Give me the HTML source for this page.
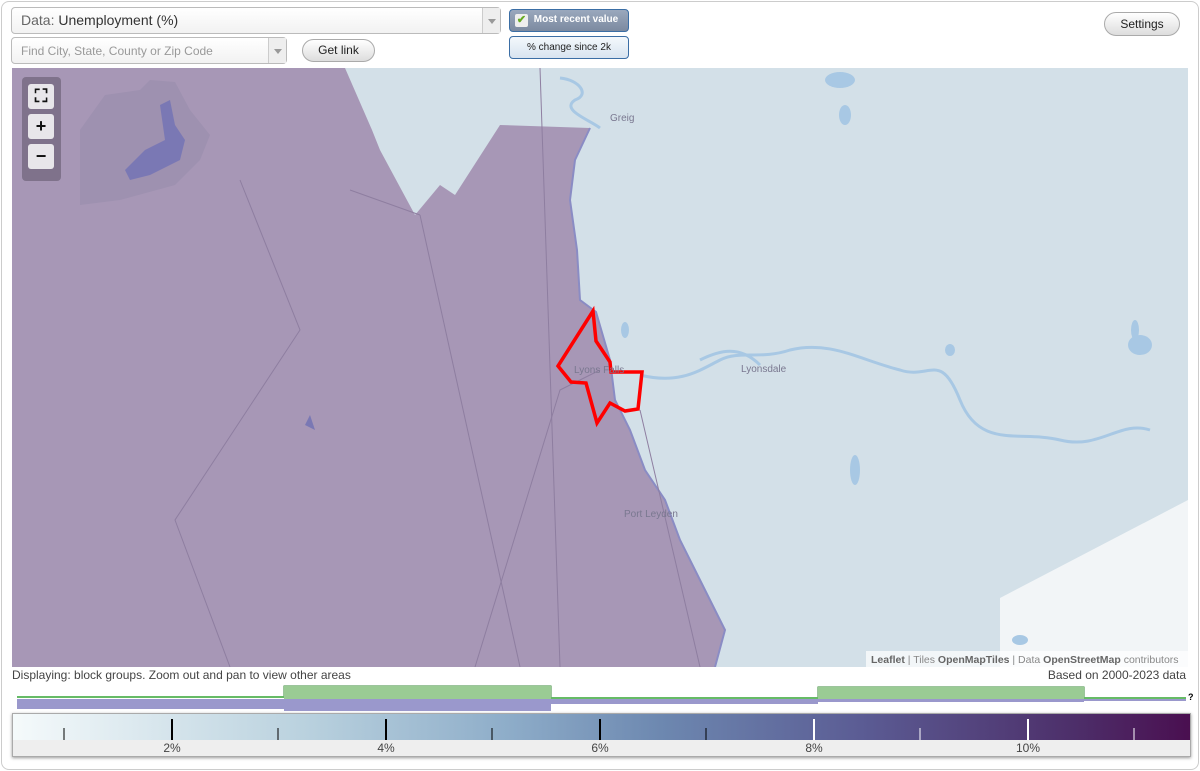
<!DOCTYPE html>
<html><head><meta charset="utf-8"><style>
*{box-sizing:border-box}
body{margin:0;width:1200px;height:771px;background:#fff;font-family:"Liberation Sans",Arial,sans-serif;overflow:hidden;position:relative}
.frame{position:absolute;left:1px;top:1px;width:1198px;height:769px;border:1px solid #ccc;border-radius:8px}
.sel{position:absolute;border:1px solid #bbb;border-radius:4px;background:linear-gradient(#fff,#f2f2f2);font-size:15px;color:#666}
.arr{position:absolute;right:0;top:0;bottom:0;width:18px;border-left:1px solid #ccc;background:#eee}
.arr:after{content:"";position:absolute;left:5px;top:50%;margin-top:-2px;border:4px solid transparent;border-top:5px solid #999}
.btn{position:absolute;border:1px solid #aaa;border-radius:12px;background:linear-gradient(#fff,#ddd);font-size:12px;color:#222;text-align:center}
.tog{position:absolute;border:1px solid #3b6ea5;border-radius:4px;font-size:10px;text-align:center}
.zc{position:absolute;left:22px;top:77px;width:39px;height:104px;background:rgba(100,90,110,.6);border-radius:4px}
.zb{position:absolute;left:6px;width:26px;height:25px;background:#e8e6ea;border-radius:3px;text-align:center;font-weight:bold;font-size:18px;line-height:24px;color:#111}
</style></head><body>
<div class="frame"></div>
<div class="sel" style="left:11px;top:7px;width:490px;height:27px;padding:4px 9px;font-size:14px">Data: <span style="color:#333">Unemployment (%)</span><div class="arr"></div></div>
<div class="sel" style="left:11px;top:37px;width:276px;height:27px;padding:6px 9px;font-size:12px;color:#999">Find City, State, County or Zip Code<div class="arr"></div></div>
<div class="btn" style="left:302px;top:39px;width:73px;height:23px;line-height:21px">Get link</div>
<div class="tog" style="left:509px;top:9px;width:120px;height:23px;line-height:20px;background:linear-gradient(#9aa8bd,#7c8aa0);color:#fff;font-weight:bold;padding-left:14px"><span style="position:absolute;left:5px;top:4px;width:13px;height:13px;background:#eee;border-radius:2px;color:#6a2;font-size:11px;line-height:13px">✔</span>Most recent value</div>
<div class="tog" style="left:509px;top:36px;width:120px;height:23px;line-height:21px;background:linear-gradient(#f4f8fc,#d8e4f0);color:#222">% change since 2k</div>
<div class="btn" style="left:1104px;top:12px;width:76px;height:24px;line-height:22px">Settings</div>

<svg style="position:absolute;left:12px;top:68px" width="1176" height="599" viewBox="12 68 1176 599">
<rect x="12" y="68" width="1176" height="599" fill="#d3e0e8"/>
<polygon points="1000,598 1188,500 1188,667 1000,667" fill="#f2f5f7"/>
<g fill="none" stroke="#a8c8e4" stroke-width="3">
<path d="M560,78 C580,80 590,95 575,100 C560,110 590,120 600,128"/>
<path d="M640,375 C680,385 700,370 720,360 C740,350 760,360 790,350 C830,340 860,360 900,370 C930,380 940,350 960,400 C980,450 1020,430 1060,440 C1100,450 1120,420 1150,430"/>
<path d="M700,360 C720,350 740,345 760,365"/>
</g>
<g fill="#a8c8e4"><ellipse cx="625" cy="330" rx="4" ry="8"/><ellipse cx="855" cy="470" rx="5" ry="15"/><ellipse cx="1140" cy="345" rx="12" ry="10"/><ellipse cx="840" cy="80" rx="15" ry="8"/><ellipse cx="845" cy="115" rx="6" ry="10"/><ellipse cx="1020" cy="640" rx="8" ry="5"/><ellipse cx="950" cy="350" rx="5" ry="6"/><ellipse cx="1135" cy="330" rx="4" ry="10"/></g>
<polygon fill="#a797b6" points="12,68 345,68 372,130 380,150 415,215 440,185 455,195 500,125 590,128 575,160 570,200 577,250 580,300 596,312 610,360 615,400 630,430 645,470 665,500 680,540 700,580 725,630 715,667 12,667"/>
<path d="M590,128 575,160 570,200 577,250 580,300 596,312 610,360 615,400 630,430 645,470 665,500 680,540 700,580 725,630 715,667" fill="none" stroke="#8a8cc4" stroke-width="2"/>
<g fill="none" stroke="#8e7ea0" stroke-width="1">
<path d="M420,215 L520,667"/><path d="M540,68 L560,667"/><path d="M475,667 L560,390 L600,370"/><path d="M240,180 L300,330 L175,520 L230,667"/><path d="M350,190 L420,215"/><path d="M640,410 L700,667"/>
</g>
<polygon fill="#9e91b0" points="80,205 80,130 105,95 140,90 150,80 175,82 190,110 210,135 200,160 175,185 120,200"/>
<path d="M125,170 L145,150 L165,140 L160,105 L170,100 L175,125 L185,140 L180,160 L150,175 L130,180Z" fill="#7a78b4"/>
<path d="M305,425 l5,-10 l5,15z" fill="#7a78b4"/>
<polygon fill="none" stroke="#f00" stroke-width="3.5" points="593,311 596,341 610,362 611,372 642,372 638,409 625,411 610,403 597,423 586,383 571,382 558,366"/>
<g font-size="10" fill="#7a7890"><text x="610" y="121">Greig</text><text x="574" y="373">Lyons Falls</text><text x="741" y="372">Lyonsdale</text><text x="624" y="517">Port Leyden</text></g>
<rect x="866" y="651" width="322" height="16" fill="rgba(255,255,255,.7)"/>
<text x="871" y="663" font-size="10.5" fill="#888"><tspan fill="#666" font-weight="bold">Leaflet</tspan> | Tiles <tspan fill="#666" font-weight="bold">OpenMapTiles</tspan> | Data <tspan fill="#666" font-weight="bold">OpenStreetMap</tspan> contributors</text>
</svg>
<div class="zc"><div class="zb" style="top:7px">⛶</div><div class="zb" style="top:37px">+</div><div class="zb" style="top:67px">−</div></div>

<div style="position:absolute;left:12px;top:668px;font-size:12px;color:#444">Displaying: block groups. Zoom out and pan to view other areas</div>
<div style="position:absolute;right:14px;top:668px;font-size:12px;color:#444">Based on 2000-2023 data</div>
<svg style="position:absolute;left:0;top:684px" width="1200" height="30">
<path d="M17,13 H284 V2 H551 V14 H818 V3 H1084 V14 H1186" fill="none" stroke="#3a8a3a" stroke-width="1"/>
<rect x="284" y="2" width="267" height="13" fill="#9acb94"/><rect x="818" y="3" width="266" height="12" fill="#9acb94"/>
<rect x="17" y="12" width="267" height="2" fill="#6b6"/><rect x="551" y="13" width="267" height="2" fill="#6b6"/><rect x="1084" y="13" width="102" height="2" fill="#6b6"/>
<rect x="17" y="15" width="267" height="10" fill="#9a98cc"/><rect x="284" y="15" width="267" height="12" fill="#9a98cc"/><rect x="551" y="15" width="267" height="5" fill="#9a98cc"/><rect x="818" y="15" width="266" height="3" fill="#9a98cc"/><rect x="1084" y="15" width="102" height="2" fill="#9a98cc"/>
<text x="1188" y="16" font-size="9" font-weight="bold">?</text>
</svg>
<div style="position:absolute;left:12px;top:713px;width:1179px;height:44px;border:1px solid #aaa;box-shadow:0 1px 3px #999;background:#eee">
<div style="position:absolute;left:0;top:0;right:0;height:26px;background:linear-gradient(90deg,#f5fafb,#b9d1de 25%,#8eadc9 42%,#6d88b0 55%,#5b5c94 72%,#4d2f6a 90%,#4a0f50)"></div>
<svg style="position:absolute;left:0;top:0" width="1179" height="44">
<g stroke="#000"><path d="M51,14V26M265,14V26M479,14V26M693,14V26" stroke-width="1"/><path d="M159,5V26M373,5V26M587,5V26" stroke-width="2"/></g>
<g stroke="#fff"><path d="M907,14V26M1121,14V26" stroke-width="1"/><path d="M801,5V26M1015,5V26" stroke-width="2"/></g>
<g font-size="12" fill="#444" text-anchor="middle"><text x="159" y="38">2%</text><text x="373" y="38">4%</text><text x="587" y="38">6%</text><text x="801" y="38">8%</text><text x="1015" y="38">10%</text></g>
</svg></div>
</body></html>
